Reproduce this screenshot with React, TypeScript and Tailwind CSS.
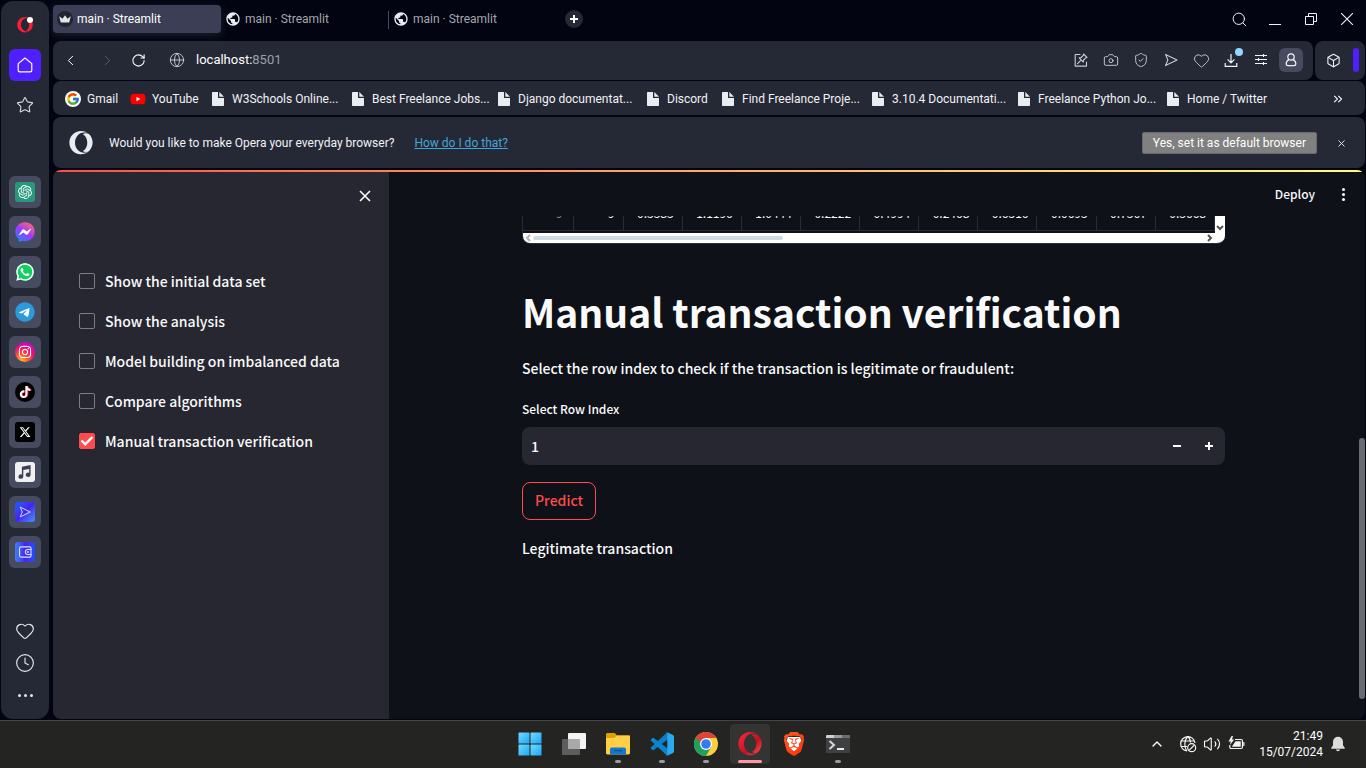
import { useState } from "react";
import type { ReactNode } from "react";
import {
  Box,
  Camera,
  ChevronLeft,
  ChevronRight,
  ChevronsRight,
  ChevronUp,
  Clock4,
  Globe,
  Heart,
  RotateCw,
  Search,
  ShieldCheck,
  Star,
  Volume2,
  X,
} from "lucide-react";
import { FaFacebookMessenger, FaInstagram, FaOpera, FaTiktok, FaWhatsapp, FaYoutube } from "react-icons/fa";
import { FaXTwitter, FaTelegram } from "react-icons/fa6";
import { FcGoogle } from "react-icons/fc";
import { MdPublic } from "react-icons/md";
import { SiBrave, SiOpenai } from "react-icons/si";

const panel = "bg-[#252935]";

/* ---------- drawings ---------- */

function Defs() {
  return (
    <svg className="absolute size-0" aria-hidden="true">
      <defs>
        <linearGradient id="opera" x1="0" y1="0" x2="1" y2="1">
          <stop offset="0" stopColor="#ff2a3d" />
          <stop offset="0.6" stopColor="#c4101f" />
          <stop offset="1" stopColor="#ff5a60" />
        </linearGradient>
        <linearGradient id="messenger" x1="0.1" y1="1" x2="0.8" y2="0">
          <stop offset="0" stopColor="#0f8fff" />
          <stop offset="0.5" stopColor="#9a3bff" />
          <stop offset="1" stopColor="#ff6a6d" />
        </linearGradient>
        <linearGradient id="brave" x1="0" y1="0" x2="1" y2="1">
          <stop offset="0" stopColor="#ff5a1f" />
          <stop offset="1" stopColor="#ff2f0a" />
        </linearGradient>
      </defs>
    </svg>
  );
}

function CrownIcon() {
  return (
    <svg viewBox="0 0 16 16" className="size-4" fill="#e6e6e8">
      <circle cx="8" cy="8" r="8" fill="#22242e" />
      <path d="M2.200 5.200 5.500 7.800 8 4.300l2.500 3.500 3.300-2.600-1.600 6.300H3.800z" />
    </svg>
  );
}

function FileIcon() {
  return (
    <svg viewBox="0 0 16 16" className="size-4 shrink-0" fill="#e9edf2">
      <path d="M2.800 1H8v6h6v7.200a.8.8 0 0 1-.8.8H2.800a.8.8 0 0 1-.8-.8V1.800a.8.8 0 0 1 .8-.8z" />
      <path d="M9.300 1 14 5.700H9.300z" />
    </svg>
  );
}

function HouseIcon() {
  return (
    <svg viewBox="0 0 16 16" className="size-4" fill="none" stroke="#fff" strokeWidth="1.200" strokeLinejoin="round">
      <path d="M8 1 1.200 6.600v6.600c0 1 .7 1.700 1.700 1.700h10.200c1 0 1.700-.7 1.700-1.700V6.600z" />
    </svg>
  );
}

function SendIcon({ className }: { className: string }) {
  return (
    <svg viewBox="0 0 16 16" className={className} fill="none" stroke="currentColor" strokeWidth="1.100" strokeLinejoin="round">
      <path d="M2.500 2.400 14 8 2.500 13.600 4.900 8z" />
    </svg>
  );
}

function EditIcon() {
  return (
    <svg viewBox="0 0 16 16" className="size-4" fill="none" stroke="currentColor" strokeWidth="1.100" strokeLinejoin="round" strokeLinecap="round">
      <path d="M7 2.500H2.200v11.600h11.300V10" />
      <path d="m10.500 2 3.500 3.400-1.200.4-2.200 2.200-.3 2-4.100-4.100 2-.4 2.100-2.200zM7.500 8.700 4.600 11.700" />
    </svg>
  );
}

function DownloadIcon() {
  return (
    <svg viewBox="0 0 16 16" className="size-4" fill="none" stroke="#f1f2f5" strokeWidth="1.200">
      <path d="M8 2v8.500M4.600 7.400 8 10.800l3.400-3.400M2.200 11v3.300h11.600V11" />
    </svg>
  );
}

function SlidersIcon() {
  return (
    <svg viewBox="0 0 16 16" className="size-4" fill="none" stroke="#f1f2f5" strokeWidth="1.100">
      <path d="M2 3.500h12M2 7.500h12M2 11.500h12M10.500 2v3M5.500 6v3M10.500 10v3" />
    </svg>
  );
}

function PersonIcon() {
  return (
    <svg viewBox="0 0 16 16" className="size-4" fill="none" stroke="#f1f2f5" strokeWidth="1.200">
      <circle cx="8" cy="5" r="3.200" />
      <path d="M5.900 7.600C4.200 8.400 3.200 10 3.200 11.800c0 1.100.8 1.900 1.900 1.900h5.800c1.100 0 1.900-.8 1.900-1.900 0-1.800-1-3.400-2.700-4.200" />
    </svg>
  );
}

function WalletIcon() {
  return (
    <svg viewBox="0 0 20 20" className="size-5" fill="none" stroke="#dfe1ff" strokeWidth="1.100">
      <path d="M16 7.400V6.200c0-.8-.6-1.300-1.300-1.300H6.200C5.200 4.900 4.500 5.600 4.500 6.500v7c0 .9.700 1.600 1.600 1.600h8.600c.7 0 1.300-.6 1.300-1.300v-1.300" />
      <path d="M16 7.500h-3.200a2.500 2.500 0 0 0 0 5H16z" />
      <circle cx="13" cy="10" r=".5" />
    </svg>
  );
}

function MusicIcon() {
  return (
    <svg viewBox="0 0 20 20" className="size-5" fill="#3c4054">
      <path d="M6.900 4.700 15.600 3v9.700a2.400 2.200 0 1 1-1.400-2V6.900L8.300 8v6.500a2.400 2.200 0 1 1-1.400-2z" />
    </svg>
  );
}

function WindowsIcon() {
  return (
    <svg viewBox="0 0 24 24" className="size-6">
      <defs>
        <linearGradient id="win" x1="0" y1="0" x2="1" y2="1" gradientUnits="objectBoundingBox">
          <stop offset="0" stopColor="#6fdcff" />
          <stop offset="1" stopColor="#1fa6f5" />
        </linearGradient>
      </defs>
      <g fill="url(#win)">
        <rect x="0.500" y="0.500" width="11" height="11" rx="0.600" />
        <rect x="12.500" y="0.500" width="11" height="11" rx="0.600" />
        <rect x="0.500" y="12.500" width="11" height="11" rx="0.600" />
        <rect x="12.500" y="12.500" width="11" height="11" rx="0.600" />
      </g>
    </svg>
  );
}

function TaskViewIcon() {
  return (
    <svg viewBox="0 0 24 24" className="size-6">
      <rect x="6" y="1" width="18" height="16" rx="1" fill="#f4f4f4" />
      <rect x="0" y="7" width="18" height="16" rx="1" fill="#5d5d5d" />
      <rect x="6" y="7" width="12" height="10" fill="#a9a9a9" />
    </svg>
  );
}

function FolderIcon() {
  return (
    <svg viewBox="0 0 24 24" className="size-6">
      <path d="M0 2.500C0 1.700.6 1 1.400 1h6.700c.5 0 .9.200 1.200.5L11 3.500H23c.6 0 1 .4 1 1V10H0z" fill="#e0a100" />
      <path d="M0 6h8.500L11 3.600h12c.6 0 1 .4 1 1V21c0 .8-.6 1.400-1.400 1.400H1.400C.6 22.400 0 21.800 0 21z" fill="#ffcf48" />
      <path d="M4 22.400v-5c0-1 .8-1.800 1.800-1.800h12.400c1 0 1.800.8 1.800 1.800v5z" fill="#1278cb" />
      <path d="M8 18.600h8" stroke="#0a5292" strokeWidth="1.200" />
    </svg>
  );
}

function CodeIcon() {
  return (
    <svg viewBox="0 0 24 24" className="size-6">
      <path d="M17 0.400 1 15.200c-.5.4-.5 1 0 1.400L2.400 18c.4.3.9.300 1.300 0L19 6.400z" fill="#0f7ec4" />
      <path d="M17 23.600 1 8.800c-.5-.4-.5-1 0-1.400L2.400 6c.4-.3.900-.3 1.300 0L19 17.600z" fill="#0a86d1" />
      <path d="M17.200 0.200 23 2.900c.6.3 1 .9 1 1.500v15.200c0 .6-.4 1.200-1 1.500l-5.800 2.700c-.6.200-1.200.1-1.600-.3.800.5 1.700 0 1.700-1V1.500c0-1-.9-1.500-1.700-1 .4-.4 1-.5 1.600-.3z" fill="#29a9f2" />
    </svg>
  );
}

function ChromeIcon() {
  return (
    <svg viewBox="0 0 24 24" className="size-6">
      <circle cx="12" cy="12" r="12" fill="#ffcd40" />
      <path d="M12 12 6.800 15 1.600 6A12 12 0 0 1 22.400 6H12z" fill="#db4437" />
      <path d="M1.600 6A12 12 0 0 0 12 24l5.200-9H12z" fill="#1fa15d" />
      <circle cx="12" cy="12" r="6" fill="#fff" />
      <circle cx="12" cy="12" r="4.800" fill="#2f7df0" />
    </svg>
  );
}

function BraveIcon() {
  return (
    <svg viewBox="0 0 24 24" className="size-6">
      <path d="M6 5h12l2 5-4 8-4 3-4-3-4-8z" fill="#fff" />
      <SiBrave x="0" y="0" size={24} fill="url(#brave)" />
    </svg>
  );
}

function TerminalIcon() {
  return (
    <svg viewBox="0 0 24 24" className="size-6">
      <path d="M0 4.500C0 3.700.7 3 1.500 3h21c.8 0 1.500.7 1.500 1.500V21H0z" fill="#3f4042" />
      <path d="M0 6V4.200C0 3.500.5 3 1.200 3H8v3z" fill="#cfcfcf" />
      <path d="M8 3h8v3H8z" fill="#9a9a9a" />
      <path d="M16 3h6.800c.7 0 1.200.5 1.200 1.200V6h-8z" fill="#6d6d6d" />
      <path d="m3.500 9 4.500 4-4.500 4" fill="none" stroke="#d8d8d8" strokeWidth="2" />
      <path d="M11 17h7" stroke="#fff" strokeWidth="1.800" />
    </svg>
  );
}

function NoNetworkIcon() {
  return (
    <svg viewBox="0 0 18 18" className="size-[18px]" fill="none" stroke="#f3f3f3" strokeWidth="1.200">
      <path d="M8 16A7.200 7.200 0 1 1 16 8M1.500 6h14M1.500 11.500H8M8.700 1.500C5 5 5 12.500 8 16M8.700 1.500C10.500 3 11.500 5 11.600 7.600" />
      <circle cx="12.700" cy="12.700" r="4" />
      <path d="m10 15.400 5.400-5.400" />
    </svg>
  );
}

function BatteryIcon() {
  return (
    <svg viewBox="0 0 18 18" className="size-[18px]" fill="none" stroke="#f3f3f3" strokeWidth="1.200">
      <path d="M8 4.500h6.200c.7 0 1.200.5 1.200 1.200v6.600c0 .7-.5 1.200-1.200 1.200H4c-.7 0-1.200-.5-1.200-1.200V10" />
      <path d="M16.800 7v4" />
      <path d="M8.500 6.300h5.200v5.400H4.800z" fill="#f3f3f3" stroke="none" />
      <path d="M4.600 1 1.500 6.500h2.200L3 10l4.200-5.500H5L6 1z" fill="#f3f3f3" stroke="none" />
    </svg>
  );
}

function BellIcon() {
  return (
    <svg viewBox="0 0 16 16" className="size-4" fill="#dcdcdc">
      <path d="M8 .8a5 5 0 0 0-5 5v3.400L1.200 12v.8h13.600V12L13 9.200V5.800a5 5 0 0 0-5-5zM5.800 13.600a2.300 2.300 0 0 0 4.400 0z" />
    </svg>
  );
}

/* ---------- browser chrome ---------- */

function Tile({ label, children }: { label: string; children: ReactNode }) {
  return (
    <button aria-label={label} className="flex size-8 items-center justify-center rounded-md bg-[#474b60]">
      {children}
    </button>
  );
}

function Rail() {
  return (
    <nav className={`flex w-12 shrink-0 flex-col items-center rounded-xl pb-5 ${panel}`}>
      <button aria-label="Menu" className="relative mt-3 flex h-6 w-8 items-center justify-center">
        <FaOpera className="size-4 text-[#fb1e35]" />
        <span className="absolute top-1 right-2 size-1.5 rounded-full bg-white" />
      </button>
      <button aria-label="Home" className="mt-3 flex size-8 items-center justify-center rounded-md bg-[#4f1fff]">
        <HouseIcon />
      </button>
      <button aria-label="Pinboards" className="mt-2 flex size-8 items-center justify-center text-[#d6d8e0]">
        <Star size={18} strokeWidth={1.5} />
      </button>
      <div className="mt-[55px] flex flex-col gap-2">
        <Tile label="ChatGPT">
          <span className="flex size-5 items-center justify-center rounded-[3px] bg-[#26997c]">
            <SiOpenai className="size-3.5 text-white" />
          </span>
        </Tile>
        <Tile label="Messenger">
          <span className="flex size-5 items-center justify-center rounded-full bg-[radial-gradient(circle,white_55%,transparent_56%)]">
            <FaFacebookMessenger className="size-5" fill="url(#messenger)" />
          </span>
        </Tile>
        <Tile label="WhatsApp">
          <span className="flex size-5 items-center justify-center rounded-full bg-[radial-gradient(circle,#0fd15f_62%,transparent_63%)]">
            <FaWhatsapp className="size-5 text-white" />
          </span>
        </Tile>
        <Tile label="Telegram">
          <span className="flex size-5 items-center justify-center rounded-full bg-[radial-gradient(circle,white_60%,transparent_61%)]">
            <FaTelegram className="size-5 text-[#2a9bd8]" />
          </span>
        </Tile>
        <Tile label="Instagram">
          <span className="flex size-5 items-center justify-center rounded-full bg-[radial-gradient(circle_at_30%_100%,#ffc83d_0%,#ff5a2a_30%,#f0087f_60%,#a010f0_100%)]">
            <FaInstagram className="size-3.5 text-white" />
          </span>
        </Tile>
        <Tile label="TikTok">
          <span className="flex size-5 items-center justify-center rounded-full bg-black">
            <FaTiktok className="size-3 text-white drop-shadow-[1px_0_0_#fe2c55]" />
          </span>
        </Tile>
        <Tile label="X">
          <span className="flex size-5 items-center justify-center rounded-[3px] bg-black">
            <FaXTwitter className="size-3 text-white" />
          </span>
        </Tile>
        <Tile label="Player">
          <span className="flex size-5 items-center justify-center rounded-[3px] bg-[#f0f0f2]">
            <MusicIcon />
          </span>
        </Tile>
        <Tile label="My Flow">
          <span className="flex size-5 items-center justify-center rounded-[3px] bg-linear-to-br from-[#0f5cff] via-[#4322f0] to-[#4a8df5] text-[#dfe1ff]">
            <SendIcon className="size-3.5" />
          </span>
        </Tile>
        <Tile label="Wallet">
          <span className="flex size-5 items-center justify-center rounded-[3px] bg-linear-to-r from-[#3f7df8] via-[#4322f0] to-[#1a4ff8]">
            <WalletIcon />
          </span>
        </Tile>
      </div>
      <div className="mt-auto flex flex-col items-center text-[#e3e5ea]">
        <button aria-label="Likes" className="flex size-8 items-center justify-center">
          <Heart size={20} strokeWidth={1.4} />
        </button>
        <button aria-label="History" className="flex size-8 items-center justify-center">
          <Clock4 size={20} strokeWidth={1.4} />
        </button>
        <button aria-label="More" className="mt-1 flex h-4 w-8 items-center justify-center gap-[3px] pt-2">
          <span className="size-[3px] rounded-full bg-[#e3e5ea]" />
          <span className="size-[3px] rounded-full bg-[#e3e5ea]" />
          <span className="size-[3px] rounded-full bg-[#e3e5ea]" />
        </button>
      </div>
    </nav>
  );
}

function TabStrip() {
  return (
    <div className="flex h-[41px] items-start pt-[5px] text-xs text-[#a4a6ad]">
      <button className="flex h-7 w-[168px] items-center gap-1 rounded-sm bg-[#3b3e54] pl-1 text-white shadow-[0_2px_8px_#3b3e5480]">
        <CrownIcon />
        main · Streamlit
      </button>
      <button className="flex h-7 w-[167px] items-center gap-1 pl-1">
        <MdPublic className="size-4 text-[#e9edf2]" />
        main · Streamlit
      </button>
      <span className="mt-1.5 h-[18px] w-px bg-[#454859]" />
      <button className="flex h-7 w-[168px] items-center gap-1 pl-1">
        <MdPublic className="size-4 text-[#e9edf2]" />
        main · Streamlit
      </button>
      <button aria-label="New tab" className="mt-[5px] ml-2 flex size-[18px] items-center justify-center rounded-full bg-[#252935]">
        <svg viewBox="0 0 8 8" className="size-2" stroke="#fff" strokeWidth="2">
          <path d="M4 0v8M0 4h8" />
        </svg>
      </button>
      <div className="ml-auto flex h-7 items-center text-[#f1f2f5]">
        <button aria-label="Search tabs" className="flex w-9 justify-center">
          <Search size={17} strokeWidth={1.4} />
        </button>
        <button aria-label="Minimize" className="flex w-9 justify-center pt-2.5">
          <span className="h-px w-3 bg-[#f1f2f5]" />
        </button>
        <button aria-label="Restore" className="flex w-9 justify-center">
          <svg viewBox="0 0 12 12" className="size-3" fill="none" stroke="currentColor">
            <path d="M.5 3.500h8v8h-8zM3.500 3.500v-3h8v8h-3" />
          </svg>
        </button>
        <button aria-label="Close" className="flex w-9 justify-center">
          <svg viewBox="0 0 12 12" className="size-3" stroke="currentColor" strokeWidth="1.100">
            <path d="m0 0 12 12M12 0 0 12" />
          </svg>
        </button>
      </div>
    </div>
  );
}

function Tool({ label, children }: { label: string; children: ReactNode }) {
  return (
    <button aria-label={label} className="relative flex h-6 w-[30px] items-center justify-center">
      {children}
    </button>
  );
}

function AddressBar() {
  return (
    <div className="flex h-[39px] gap-0.5">
      <div className={`flex flex-1 items-center rounded-lg pr-[7px] pb-px text-[#c9ccd4] ${panel}`}>
        <button aria-label="Back" className="flex w-[34px] justify-center text-white">
          <ChevronLeft size={17} strokeWidth={1.4} />
        </button>
        <button aria-label="Forward" className="flex w-10 justify-center text-[#5b5f6e]">
          <ChevronRight size={17} strokeWidth={1.4} />
        </button>
        <button aria-label="Reload" className="flex w-[22px] justify-center text-white">
          <RotateCw size={15} strokeWidth={1.7} />
        </button>
        <Globe size={16} strokeWidth={1.4} className="ml-5 shrink-0" />
        <div className="ml-[11px] flex-1 text-[13px] leading-5 text-white">
          localhost:<span className="text-[#9aa0ad]">8501</span>
        </div>
        <Tool label="Edit page"><EditIcon /></Tool>
        <Tool label="Snapshot"><Camera size={16} strokeWidth={1.4} /></Tool>
        <Tool label="Ad blocker"><ShieldCheck size={16} strokeWidth={1.4} /></Tool>
        <Tool label="Send to My Flow"><SendIcon className="size-4" /></Tool>
        <Tool label="Add to pinboards"><Heart size={17} strokeWidth={1.3} /></Tool>
        <Tool label="Downloads">
          <DownloadIcon />
          <span className="absolute top-0 right-[3px] size-2 rounded-full bg-[#8fd8ff]" />
        </Tool>
        <Tool label="Easy setup"><SlidersIcon /></Tool>
        <Tool label="Profile">
          <span className="flex size-6 items-center justify-center rounded-md bg-[#474b60]"><PersonIcon /></span>
        </Tool>
      </div>
      <div className={`flex w-[50px] items-center justify-end gap-3 rounded-lg pr-1.5 pb-px ${panel}`}>
        <button aria-label="Extensions" className="text-[#f1f2f5]"><Box size={15} strokeWidth={1.7} /></button>
        <span className="h-6 w-1.5 rounded-full bg-[#4f1fff]" />
      </div>
    </div>
  );
}

const bookmarks: { name: string; width: string; icon?: ReactNode }[] = [
  {
    name: "Gmail",
    width: "w-[65px]",
    icon: <span className="flex size-4 shrink-0 items-center justify-center rounded-full bg-white"><FcGoogle className="size-3.5" /></span>,
  },
  {
    name: "YouTube",
    width: "w-[80px]",
    icon: <FaYoutube className="size-4 shrink-0 rounded-full bg-[radial-gradient(circle,white_40%,transparent_41%)] text-[#ff0000]" />,
  },
  { name: "W3Schools Online...", width: "w-[140px]" },
  { name: "Best Freelance Jobs...", width: "w-[146px]" },
  { name: "Django documentat...", width: "w-[149px]" },
  { name: "Discord", width: "w-[75px]" },
  { name: "Find Freelance Proje...", width: "w-[150px]" },
  { name: "3.10.4 Documentati...", width: "w-[146px]" },
  { name: "Freelance Python Jo...", width: "w-[149px]" },
  { name: "Home / Twitter", width: "w-[120px]" },
];

function BookmarksBar() {
  return (
    <div className={`mt-px flex h-[34px] items-center rounded-lg pt-px pr-5 pl-3 text-xs text-[#f1f2f5] ${panel}`}>
      {bookmarks.map((b) => (
        <a key={b.name} href="#" className={`flex shrink-0 items-center gap-1.5 whitespace-nowrap ${b.width}`}>
          {b.icon ?? <FileIcon />}
          {b.name}
        </a>
      ))}
      <button aria-label="More bookmarks" className="ml-auto"><ChevronsRight size={14} strokeWidth={2} /></button>
    </div>
  );
}

function DefaultBrowserBanner() {
  return (
    <div className={`mt-0.5 flex h-[51px] items-center rounded-lg pt-px pr-[18px] pl-4 text-xs text-[#f1f2f5] ${panel}`}>
      <FaOpera className="size-6 text-[#e9edf2]" />
      <span className="ml-4">Would you like to make Opera your everyday browser?</span>
      <a href="#" className="ml-5 text-[#43a5d8] underline">How do I do that?</a>
      <button className="ml-auto h-[22px] rounded-xs border border-[#6a6a6a] bg-[#808080] px-2.5 text-white">
        Yes, set it as default browser
      </button>
      <button aria-label="Dismiss" className="ml-[19px]"><X size={11} strokeWidth={2} /></button>
    </div>
  );
}

/* ---------- page ---------- */

const options = [
  "Show the initial data set",
  "Show the analysis",
  "Model building on imbalanced data",
  "Compare algorithms",
  "Manual transaction verification",
];

function Options() {
  return (
    <aside className="flex w-[336px] shrink-0 flex-col bg-[#262730]">
      <button aria-label="Close sidebar" className="mt-3.5 mr-3.5 flex size-5 items-center justify-center self-end">
        <svg viewBox="0 0 12 12" className="size-3" stroke="#fafafa" strokeWidth="1.600">
          <path d="m1 1 10 10M11 1 1 11" />
        </svg>
      </button>
      <div className="mt-[63px] flex flex-col gap-4 pl-[26px]">
        {options.map((o, i) => (
          <label key={o} className="flex items-center gap-2.5 text-[14px] leading-6">
            <span className="relative flex size-4 shrink-0">
              <input
                type="checkbox"
                defaultChecked={i === 4}
                className="peer size-4 appearance-none rounded-xs border border-[#7c7d84] checked:border-[#ff4b4b] checked:bg-[#ff4b4b]"
              />
              <svg viewBox="0 0 16 16" className="pointer-events-none absolute inset-0 hidden peer-checked:block" fill="none" stroke="#fff" strokeWidth="2.400">
                <path d="m2.500 7.500 3.700 3.700L13.500 4" />
              </svg>
            </span>
            {o}
          </label>
        ))}
      </div>
    </aside>
  );
}

const row = ["9", "9", "-0.3383", "1.1196", "1.0444", "0.2222", "0.4994", "-0.2468", "0.6516", "0.0695", "-0.7367", "-0.3668"];

function DataTable() {
  return (
    <div className="flex h-7 flex-col justify-end overflow-hidden rounded-b-lg border-b border-l border-[#2a2c35]">
      <div className="flex">
        <table className="mb-0.5 w-full table-fixed border-collapse text-right text-[12px] leading-[18px] font-normal">
          <colgroup>
            <col className="w-[50px]" />
            <col className="w-[50px]" />
          </colgroup>
          <tbody>
            <tr className="border-b border-[#2a2c35]">
              {row.map((v, i) => (
                <td
                  key={i}
                  className={`h-9 border-r border-[#2a2c35] pt-0 pb-2 align-bottom ${i === 0 ? "pr-2.5 text-[#8b8c93]" : "pr-2"}`}
                >
                  {v}
                </td>
              ))}
            </tr>
          </tbody>
        </table>
        <div className="flex w-[10px] shrink-0 items-end justify-center bg-white pb-0.5">
          <svg viewBox="0 0 8 6" className="h-1.5 w-2" fill="none" stroke="#555" strokeWidth="2"><path d="m1 1 3 3 3-3" /></svg>
        </div>
      </div>
      <div className="flex h-[10px] shrink-0 items-center bg-white pr-3 pl-0.5">
        <svg viewBox="0 0 6 8" className="h-2 w-1.5" fill="none" stroke="#b5b5b5" strokeWidth="2"><path d="M5 1 2 4l3 3" /></svg>
        <span className="ml-0.5 h-1 w-[250px] rounded-full bg-[#d0dae3]" />
        <svg viewBox="0 0 6 8" className="ml-auto h-2 w-1.5" fill="none" stroke="#555" strokeWidth="2"><path d="m1 1 3 3-3 3" /></svg>
      </div>
    </div>
  );
}

function MainContent() {
  const [index, setIndex] = useState(1);
  return (
    <main className="flex min-w-0 flex-1">
      <div className="flex min-w-0 flex-1 flex-col">
        <header className="flex h-11 shrink-0 items-center justify-end gap-6 pr-3 text-[12px]">
          <button>Deploy</button>
          <button aria-label="Main menu" className="flex w-2 flex-col items-center gap-0.5">
            <span className="size-[3px] rounded-full bg-[#fafafa]" />
            <span className="size-[3px] rounded-full bg-[#fafafa]" />
            <span className="size-[3px] rounded-full bg-[#fafafa]" />
          </button>
        </header>
        <div className="mx-auto w-full max-w-[704px] pr-px text-[14px] leading-6">
          <DataTable />
          <h1 className="mt-[41px] text-[39px] leading-[52px] font-bold">Manual transaction verification</h1>
          <p className="mt-[19px]">Select the row index to check if the transaction is legitimate or fraudulent:</p>
          <label htmlFor="row-index" className="mt-[19px] block text-[12px] leading-5">Select Row Index</label>
          <div className="mt-2 flex h-[38px] overflow-hidden rounded-lg bg-[#262730]">
            <input
              id="row-index"
              inputMode="numeric"
              value={index}
              onChange={(e) => setIndex(Number(e.target.value) || 0)}
              className="min-w-0 flex-1 bg-transparent px-[9px] outline-none"
            />
            <button aria-label="Decrease" onClick={() => setIndex(index - 1)} className="flex w-8 items-center justify-center">
              <svg viewBox="0 0 8 8" className="size-2" stroke="#fff" strokeWidth="2"><path d="M0 4h8" /></svg>
            </button>
            <button aria-label="Increase" onClick={() => setIndex(index + 1)} className="flex w-8 items-center justify-center">
              <svg viewBox="0 0 8 8" className="size-2" stroke="#fff" strokeWidth="2"><path d="M4 0v8M0 4h8" /></svg>
            </button>
          </div>
          <button className="mt-[17px] block h-[38px] rounded-lg border border-[#ff4b4b] px-3 pb-0.5 text-[#ff4b4b]">Predict</button>
          <p className="mt-4">Legitimate transaction</p>
        </div>
      </div>
      <div className="w-1.5 shrink-0">
        <div className="mt-[266px] h-[261px] rounded-full bg-[#6a6b70]" />
      </div>
    </main>
  );
}

/* ---------- taskbar ---------- */

const apps: { name: string; icon: ReactNode; running?: boolean; active?: boolean }[] = [
  { name: "Start", icon: <WindowsIcon /> },
  { name: "Task view", icon: <TaskViewIcon /> },
  { name: "File Explorer", icon: <FolderIcon />, running: true },
  { name: "Visual Studio Code", icon: <CodeIcon />, running: true },
  { name: "Chrome", icon: <ChromeIcon />, running: true },
  { name: "Opera", icon: <FaOpera className="size-6" fill="url(#opera)" />, active: true },
  { name: "Brave", icon: <BraveIcon /> },
  { name: "Terminal", icon: <TerminalIcon />, running: true },
];

function Taskbar() {
  return (
    <footer className="grid h-12 shrink-0 grid-cols-[1fr_auto_1fr] items-center border-t border-[#454544] bg-[#242423] text-white">
      <span />
      <div className="flex gap-1 pb-0.5 pl-0.5">
        {apps.map((a) => (
          <button
            key={a.name}
            aria-label={a.name}
            className={`relative flex size-10 items-center justify-center rounded-sm ${a.active ? "bg-[#343433]" : ""}`}
          >
            {a.icon}
            {a.running && <span className="absolute bottom-px h-[3px] w-1.5 rounded-full bg-[#9b9b9b]" />}
            {a.active && <span className="absolute bottom-px h-[3px] w-6 rounded-full bg-[#ff98a4]" />}
          </button>
        ))}
      </div>
      <div className="flex items-center justify-end pr-5 pb-px">
        <button aria-label="Hidden icons" className="mr-3.5"><ChevronUp size={16} strokeWidth={2} /></button>
        <button aria-label="Network, volume and battery" className="flex gap-1.5">
          <NoNetworkIcon />
          <Volume2 size={18} strokeWidth={1.5} />
          <BatteryIcon />
        </button>
        <div className="ml-3.5 text-right text-xs leading-4">
          <div>21:49</div>
          <div>15/07/2024</div>
        </div>
        <button aria-label="Notifications" className="ml-[7px]"><BellIcon /></button>
      </div>
    </footer>
  );
}

export default function App() {
  return (
    <div className="flex h-screen flex-col overflow-hidden bg-[#020411] font-[Roboto,'Open_Sans',sans-serif]">
      <Defs />
      <div className="flex min-h-0 flex-1 gap-1 pr-px pb-px pl-px">
        <div className="flex pt-px"><Rail /></div>
        <div className="flex min-w-0 flex-1 flex-col">
          <TabStrip />
          <AddressBar />
          <BookmarksBar />
          <DefaultBrowserBanner />
          <div className="mt-0.5 flex min-h-0 flex-1 flex-col overflow-hidden rounded-lg bg-[#0e1117] font-['Noto_Sans_CJK_SC',sans-serif] font-medium text-[#fafafa]">
            <div className="h-0.5 shrink-0 bg-linear-to-r from-[#ff4b4b] to-[#fffd80]" />
            <div className="flex min-h-0 flex-1">
              <Options />
              <MainContent />
            </div>
          </div>
        </div>
      </div>
      <Taskbar />
    </div>
  );
}
